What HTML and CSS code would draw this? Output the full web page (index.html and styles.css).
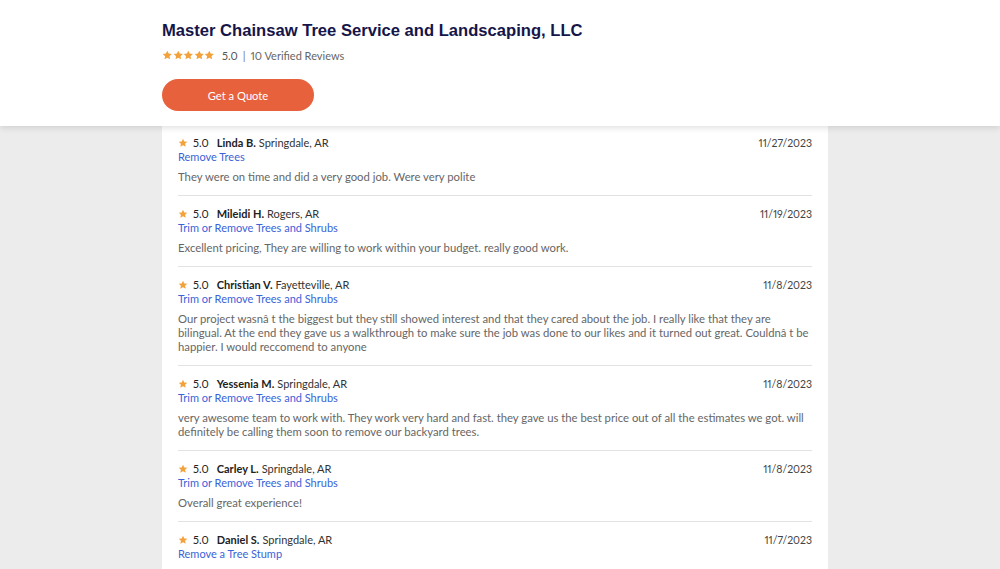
FILE: index.html
```html
<!DOCTYPE html>
<html>
<head>
<meta charset="utf-8">
<link rel="stylesheet" href="styles.css">
</head>
<body>
<header class="top">
  <div class="top-inner">
    <h1 class="title">Master Chainsaw Tree Service and Landscaping, LLC</h1>
    <div class="rating">
      <span class="stars">
        <svg viewBox="0 0 24 24"><path d="M12 1.5l3.1 6.6 7.2.9-5.3 5 1.4 7.2L12 17.6l-6.4 3.6L7 14l-5.3-5 7.2-.9z"/></svg>
        <svg viewBox="0 0 24 24"><path d="M12 1.5l3.1 6.6 7.2.9-5.3 5 1.4 7.2L12 17.6l-6.4 3.6L7 14l-5.3-5 7.2-.9z"/></svg>
        <svg viewBox="0 0 24 24"><path d="M12 1.5l3.1 6.6 7.2.9-5.3 5 1.4 7.2L12 17.6l-6.4 3.6L7 14l-5.3-5 7.2-.9z"/></svg>
        <svg viewBox="0 0 24 24"><path d="M12 1.5l3.1 6.6 7.2.9-5.3 5 1.4 7.2L12 17.6l-6.4 3.6L7 14l-5.3-5 7.2-.9z"/></svg>
        <svg viewBox="0 0 24 24"><path d="M12 1.5l3.1 6.6 7.2.9-5.3 5 1.4 7.2L12 17.6l-6.4 3.6L7 14l-5.3-5 7.2-.9z"/></svg>
      </span>
      <span class="score">5.0</span>
      <span class="sep">|</span>
      <span class="count">10 Verified Reviews</span>
    </div>
    <button class="quote">Get a Quote</button>
  </div>
</header>
<main class="list">
  <article class="review">
    <div class="head">
      <div class="who">
        <svg class="star" viewBox="0 0 24 24"><path d="M12 1.5l3.1 6.6 7.2.9-5.3 5 1.4 7.2L12 17.6l-6.4 3.6L7 14l-5.3-5 7.2-.9z"/></svg>
        <span class="num">5.0</span>
        <span class="name">Linda B.</span>
        <span class="loc">Springdale, AR</span>
      </div>
      <span class="date">11/27/2023</span>
    </div>
    <a class="type">Remove Trees</a>
    <p class="text">They were on time and did a very good job. Were very polite</p>
  </article>
  <article class="review">
    <div class="head">
      <div class="who">
        <svg class="star" viewBox="0 0 24 24"><path d="M12 1.5l3.1 6.6 7.2.9-5.3 5 1.4 7.2L12 17.6l-6.4 3.6L7 14l-5.3-5 7.2-.9z"/></svg>
        <span class="num">5.0</span>
        <span class="name">Mileidi H.</span>
        <span class="loc">Rogers, AR</span>
      </div>
      <span class="date">11/19/2023</span>
    </div>
    <a class="type">Trim or Remove Trees and Shrubs</a>
    <p class="text">Excellent pricing, They are willing to work within your budget. really good work.</p>
  </article>
  <article class="review">
    <div class="head">
      <div class="who">
        <svg class="star" viewBox="0 0 24 24"><path d="M12 1.5l3.1 6.6 7.2.9-5.3 5 1.4 7.2L12 17.6l-6.4 3.6L7 14l-5.3-5 7.2-.9z"/></svg>
        <span class="num">5.0</span>
        <span class="name">Christian V.</span>
        <span class="loc">Fayetteville, AR</span>
      </div>
      <span class="date">11/8/2023</span>
    </div>
    <a class="type">Trim or Remove Trees and Shrubs</a>
    <p class="text">Our project wasnâ t the biggest but they still showed interest and that they cared about the job. I really like that they are bilingual. At the end they gave us a walkthrough to make sure the job was done to our likes and it turned out great. Couldnâ t be happier. I would reccomend to anyone</p>
  </article>
  <article class="review">
    <div class="head">
      <div class="who">
        <svg class="star" viewBox="0 0 24 24"><path d="M12 1.5l3.1 6.6 7.2.9-5.3 5 1.4 7.2L12 17.6l-6.4 3.6L7 14l-5.3-5 7.2-.9z"/></svg>
        <span class="num">5.0</span>
        <span class="name">Yessenia M.</span>
        <span class="loc">Springdale, AR</span>
      </div>
      <span class="date">11/8/2023</span>
    </div>
    <a class="type">Trim or Remove Trees and Shrubs</a>
    <p class="text">very awesome team to work with. They work very hard and fast. they gave us the best price out of all the estimates we got. will definitely be calling them soon to remove our backyard trees.</p>
  </article>
  <article class="review">
    <div class="head">
      <div class="who">
        <svg class="star" viewBox="0 0 24 24"><path d="M12 1.5l3.1 6.6 7.2.9-5.3 5 1.4 7.2L12 17.6l-6.4 3.6L7 14l-5.3-5 7.2-.9z"/></svg>
        <span class="num">5.0</span>
        <span class="name">Carley L.</span>
        <span class="loc">Springdale, AR</span>
      </div>
      <span class="date">11/8/2023</span>
    </div>
    <a class="type">Trim or Remove Trees and Shrubs</a>
    <p class="text">Overall great experience!</p>
  </article>
  <article class="review">
    <div class="head">
      <div class="who">
        <svg class="star" viewBox="0 0 24 24"><path d="M12 1.5l3.1 6.6 7.2.9-5.3 5 1.4 7.2L12 17.6l-6.4 3.6L7 14l-5.3-5 7.2-.9z"/></svg>
        <span class="num">5.0</span>
        <span class="name">Daniel S.</span>
        <span class="loc">Springdale, AR</span>
      </div>
      <span class="date">11/7/2023</span>
    </div>
    <a class="type">Remove a Tree Stump</a>
  </article>
</main>
</body>
</html>
```
FILE: styles.css
```css
* { box-sizing: border-box; }
html, body { margin: 0; padding: 0; }
body {
  background: #ececec;
  font-family: Lato, "Open Sans", sans-serif;
  font-variant-numeric: proportional-nums;
  color: #555;
  height: 569px;
  overflow: hidden;
}
.top {
  position: relative;
  z-index: 2;
  background: #fff;
  height: 126px;
  box-shadow: 0 2px 6px rgba(0,0,0,0.12);
}
.top-inner {
  margin-left: 162px;
  padding-top: 20px;
}
.title {
  margin: 0;
  font-family: "Liberation Sans", Arial, sans-serif;
  font-weight: bold;
  font-size: 16.6px;
  line-height: 22px;
  color: #15154a;
}
.rating {
  display: flex;
  align-items: center;
  margin-top: 3px;
  height: 20px;
  font-size: 11px;
  color: #666;
}
.stars { display: flex; margin-right: 7px; }
.stars svg { width: 10.6px; height: 10.6px; fill: #f2a13b; }
.score { color: #555; }
.sep { margin: 0 5px; color: #777; }
.quote {
  display: block;
  margin-top: 14px;
  width: 152px;
  height: 32px;
  border: none;
  border-radius: 16px;
  background: #e8613d;
  color: #fff;
  font-family: Lato, sans-serif;
  font-size: 11.2px;
  padding: 0;
}
.list {
  margin-left: 162px;
  width: 666px;
  background: #fff;
  padding: 10px 16px 0;
  min-height: 500px;
}
.review {
  border-bottom: 1px solid #e2e2e2;
  padding: 0 0 11px;
  margin-bottom: 11px;
}
.head {
  display: flex;
  justify-content: space-between;
  align-items: center;
  height: 14px;
  font-size: 11px;
  line-height: 14px;
}
.who { display: flex; align-items: center; }
.star { width: 10px; height: 10px; fill: #f2a13b; margin-right: 5px; }
.num { color: #222; margin-right: 8px; }
.name { font-weight: bold; color: #222; margin-right: 3px; }
.loc { color: #333; }
.date { color: #444; font-size: 10.5px; }
.type {
  display: block;
  font-size: 11px;
  line-height: 14px;
  color: #3b62d8;
}
.text {
  margin: 6px 0 0;
  font-size: 11.3px;
  line-height: 14px;
  color: #666;
}
```
